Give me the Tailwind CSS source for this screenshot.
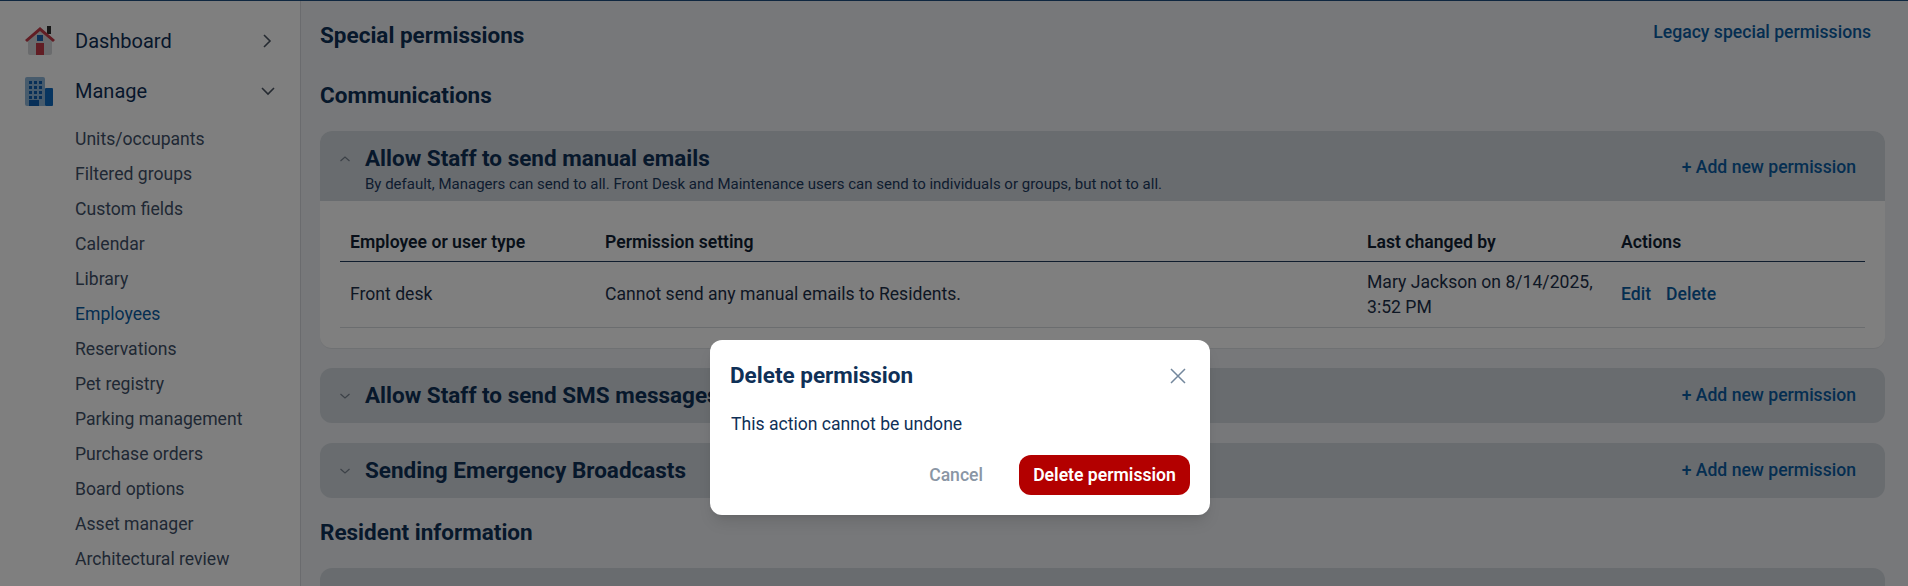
<!DOCTYPE html>
<html>
<head>
<meta charset="utf-8">
<script src="https://cdn.jsdelivr.net/npm/@tailwindcss/browser@4"></script>
</head>
<body class="h-[586px] overflow-hidden font-['Roboto',sans-serif] text-[#0f2f57] bg-[#eef0f4]">
<div class="relative h-[586px] overflow-hidden">
  <div class="h-px bg-[#1f4f80]"></div>
  <div class="flex h-[585px]">
    <aside class="w-[301px] shrink-0 bg-white border-r border-[#d4d7dc] pl-[24px] pr-[24px]">
      <div class="flex items-center h-[50px] mt-[15px]">
        <svg class="w-[32px] h-[32px] shrink-0" viewBox="0 0 32 32"><rect x="23" y="1" width="4" height="8" fill="#2e2e2e"/><path d="M4 14 16 4l12 10v14a2 2 0 0 1-2 2H6a2 2 0 0 1-2-2z" fill="#d5d7da"/><path d="M1 15 16 2l15 13-2 2L16 6 3 17z" fill="#c23a48"/><rect x="13" y="10" width="6" height="6" fill="#1c63b0"/><rect x="12" y="18" width="8" height="12" fill="#c23a48"/></svg>
        <span class="ml-[19px] text-[20px] flex-1">Dashboard</span>
        <svg class="w-[16px] h-[16px] mr-[1px] text-[#4b5563]" viewBox="0 0 16 16" fill="none" stroke="currentColor" stroke-width="1.6"><path d="m5 2 6 6-6 6"/></svg>
      </div>
      <div class="flex items-center h-[50px]">
        <svg class="w-[32px] h-[32px] shrink-0" viewBox="0 0 32 32"><path d="M1 4a2 2 0 0 1 2-2h16a2 2 0 0 1 2 2v27H3a2 2 0 0 1-2-2z" fill="#8fb6d8"/><rect x="21" y="13" width="8" height="18" rx="1" fill="#0f6bc0"/><rect x="5" y="25" width="10" height="6" fill="#0f5fb0"/><g fill="#0f5fb0"><rect x="5" y="6" width="3" height="3"/><rect x="10" y="6" width="3" height="3"/><rect x="15" y="6" width="3" height="3"/><rect x="5" y="11" width="3" height="3"/><rect x="10" y="11" width="3" height="3"/><rect x="15" y="11" width="3" height="3"/><rect x="5" y="16" width="3" height="3"/><rect x="10" y="16" width="3" height="3"/><rect x="15" y="16" width="3" height="3"/><rect x="5" y="21" width="3" height="3"/><rect x="10" y="21" width="3" height="3"/><rect x="15" y="21" width="3" height="3"/></g></svg>
        <span class="ml-[19px] text-[20px] flex-1">Manage</span>
        <svg class="w-[16px] h-[16px] text-[#4b5563]" viewBox="0 0 16 16" fill="none" stroke="currentColor" stroke-width="1.6"><path d="m2 5 6 6 6-6"/></svg>
      </div>
      <nav class="mt-[6px] pl-[51px] flex flex-col text-[17.6px] leading-[35px] text-[#3f5068]">
        <a>Units/occupants</a><a>Filtered groups</a><a>Custom fields</a><a>Calendar</a><a>Library</a><a class="text-[#0a5da3]">Employees</a><a>Reservations</a><a>Pet registry</a><a>Parking management</a><a>Purchase orders</a><a>Board options</a><a>Asset manager</a><a>Architectural review</a>
      </nav>
    </aside>
    <main class="flex-1 pl-[19px] pr-[23px] min-w-0">
      <div class="flex justify-between items-start h-[80px] pt-[18px]">
        <h2 class="text-[22.5px] leading-[32px] font-bold text-[#0f3057]">Special permissions</h2>
        <a class="text-[17.6px] leading-[28px] font-medium text-[#0a5da3] -mt-[1px] mr-[14px]">Legacy special permissions</a>
      </div>
      <h2 class="text-[22.5px] leading-[28px] font-bold text-[#0f3057]">Communications</h2>
      <section class="mt-[22px] rounded-[12px] bg-white border-b border-[#dfe2e6] overflow-hidden h-[218px]">
        <header class="h-[70px] bg-[#d2d8de] flex items-start pl-[20px] pr-[29px] pt-[13px]">
          <svg class="w-[10px] h-[10px] mt-[10px] mr-[15px] text-[#77828f]" viewBox="0 0 10 10" fill="none" stroke="currentColor" stroke-width="1.2"><path d="m0.5 7 4.5-4 4.5 4"/></svg>
          <div class="flex-1">
            <div class="text-[22.5px] leading-[28px] font-bold text-[#0f3057]">Allow Staff to send manual emails</div>
            <div class="text-[15px] leading-[20px] mt-[2px] text-[#1c3a5e]">By default, Managers can send to all. Front Desk and Maintenance users can send to individuals or groups, but not to all.</div>
          </div>
          <a class="text-[17.6px] leading-[28px] mt-[9px] font-medium text-[#0a5da3]">+ Add new permission</a>
        </header>
        <div class="mx-[20px]">
          <div class="grid grid-cols-[255px_762px_254px_253px] border-b border-[#1f3a5c] h-[61px] items-end pb-[7px] text-[17.6px] font-semibold leading-[24px] text-[#111f33]">
            <div class="pl-[10px]">Employee or user type</div><div class="pl-[10px]">Permission setting</div><div class="pl-[10px]">Last changed by</div><div class="pl-[10px]">Actions</div>
          </div>
          <div class="grid grid-cols-[255px_762px_254px_253px] border-b border-[#d7dade] h-[66px] items-center text-[17.6px] leading-[25px] text-[#1c2f49]">
            <div class="pl-[10px]">Front desk</div><div class="pl-[10px]">Cannot send any manual emails to Residents.</div><div class="px-[10px]">Mary Jackson on 8/14/2025, 3:52 PM</div>
            <div class="pl-[10px] flex gap-[15px] font-medium text-[#0a5da3]"><a>Edit</a><a>Delete</a></div>
          </div>
        </div>
      </section>
      <section class="mt-[19px] h-[55px] rounded-[12px] bg-[#d2d8de] flex items-center pl-[20px] pr-[29px]">
        <svg class="w-[10px] h-[10px] mr-[15px] text-[#77828f]" viewBox="0 0 10 10" fill="none" stroke="currentColor" stroke-width="1.2"><path d="m0.5 3 4.5 4 4.5-4"/></svg>
        <div class="flex-1 text-[22.5px] font-bold text-[#0f3057]">Allow Staff to send SMS messages</div>
        <a class="text-[17.6px] font-medium text-[#0a5da3]">+ Add new permission</a>
      </section>
      <section class="mt-[20px] h-[55px] rounded-[12px] bg-[#d2d8de] flex items-center pl-[20px] pr-[29px]">
        <svg class="w-[10px] h-[10px] mr-[15px] text-[#77828f]" viewBox="0 0 10 10" fill="none" stroke="currentColor" stroke-width="1.2"><path d="m0.5 3 4.5 4 4.5-4"/></svg>
        <div class="flex-1 text-[22.5px] font-bold text-[#0f3057]">Sending Emergency Broadcasts</div>
        <a class="text-[17.6px] font-medium text-[#0a5da3]">+ Add new permission</a>
      </section>
      <h2 class="text-[22.5px] leading-[28px] font-bold text-[#0f3057] mt-[20px]">Resident information</h2>
      <section class="mt-[22px] h-[55px] rounded-[12px] bg-[#d2d8de] flex items-center pl-[20px] pr-[29px]">
        <svg class="w-[10px] h-[10px] mr-[15px] text-[#77828f]" viewBox="0 0 10 10" fill="none" stroke="currentColor" stroke-width="1.2"><path d="m0.5 3 4.5 4 4.5-4"/></svg>
        <div class="flex-1 text-[22.5px] font-bold text-[#0f3057]">Allow Staff to view Resident personal</div>
      </section>
    </main>
  </div>
  <div class="absolute inset-0 bg-black/50"></div>
  <div class="absolute left-[710px] top-[340px] w-[500px] h-[175px] rounded-[12px] bg-white shadow-lg px-[20px] pt-[20px]">
    <div class="flex justify-between items-center h-[32px]">
      <h3 class="text-[22.5px] font-bold text-[#0f3057]">Delete permission</h3>
      <svg class="w-[16px] h-[16px] mr-[4px] text-[#73879c]" viewBox="0 0 16 16" fill="none" stroke="currentColor" stroke-width="1.5"><path d="m1 1 14 14M15 1 1 15"/></svg>
    </div>
    <p class="text-[17.6px] leading-[24px] mt-[20px] ml-px text-[#0f3057]">This action cannot be undone</p>
    <div class="flex justify-end items-center mt-[19px]">
      <button class="text-[17.6px] font-medium text-[#8a96a5] mr-[36px]">Cancel</button>
      <button class="h-[40px] w-[171px] rounded-[12px] bg-[#b30000] text-white text-[17.6px] font-semibold">Delete permission</button>
    </div>
  </div>
</div>
</body>
</html>
